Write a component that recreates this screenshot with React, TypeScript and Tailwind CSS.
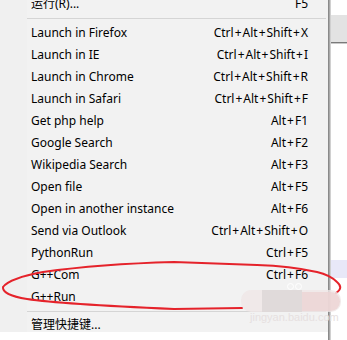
import React from "react";

const items: [string, string][] = [
  ["Launch in Firefox", "Ctrl+Alt+Shift+X"],
  ["Launch in IE", "Ctrl+Alt+Shift+I"],
  ["Launch in Chrome", "Ctrl+Alt+Shift+R"],
  ["Launch in Safari", "Ctrl+Alt+Shift+F"],
  ["Get php help", "Alt+F1"],
  ["Google Search", "Alt+F2"],
  ["Wikipedia Search", "Alt+F3"],
  ["Open file", "Alt+F5"],
  ["Open in another instance", "Alt+F6"],
  ["Send via Outlook", "Ctrl+Alt+Shift+O"],
  ["PythonRun", "Ctrl+F5"],
  ["G++Com", "Ctrl+F6"],
  ["G++Run", ""],
];

function Shortcut({ text }: { text: string }) {
  const parts = text.split("+");
  return (
    <span className="flex">
      {parts.map((p, i) => (
        <React.Fragment key={i}>
          {i > 0 && <span className="px-[1px]">+</span>}
          <span>{p}</span>
        </React.Fragment>
      ))}
    </span>
  );
}

function Row({ label, shortcut }: { label: string; shortcut: string }) {
  return (
    <div className="h-[22px] shrink-0 flex items-center justify-between pl-[4px] pr-[20px]">
      <span>{label}</span>
      {shortcut ? <Shortcut text={shortcut} /> : <span />}
    </div>
  );
}

export default function App() {
  return (
    <div
      className="relative w-[347px] h-[340px] bg-white overflow-hidden flex text-[12px] text-black"
      style={{ fontFamily: '"Noto Sans", "Noto Sans CJK SC", sans-serif' }}
    >
      <div className="w-[328px] h-[332px] flex bg-[#f2f2f2] overflow-hidden">
        <div className="w-[27px] shrink-0 bg-[#f0f0f0]" />
        <div className="flex-1 flex flex-col">
          <div className="-mt-[7px]">
            <Row label="运行(R)..." shortcut="F5" />
          </div>
          <div className="h-[7px] shrink-0 pt-[3px] pr-[2px]">
            <div className="h-px bg-[#d5d5d5]" />
          </div>
          {items.map(([l, s]) => (
            <Row key={l} label={l} shortcut={s} />
          ))}
          <div className="h-[6px] shrink-0 pt-[3px] pr-[2px]">
            <div className="h-px bg-[#d5d5d5]" />
          </div>
          <Row label="管理快捷键..." shortcut="" />
        </div>
      </div>
      <div className="w-px h-full bg-[#8a8a8a]" />
      <div className="w-px h-full bg-[#a8a8a8]" />
      <div className="w-px h-full bg-[#d0d0d0]" />
      <div className="flex-1 flex flex-col">
        <div className="h-[15px]" />
        <div className="h-[27px] bg-[#e3e3e3]" />
        <div className="h-px bg-[#7a7a7a]" />
        <div className="h-px bg-[#c8c8c8]" />
        <div className="h-[216px]" />
        <div className="h-[18px] bg-[#e8e8f8]" />
      </div>

      <svg
        className="absolute left-0 top-0 pointer-events-none"
        width="347"
        height="340"
        viewBox="0 0 347 340"
      >
        <path
          d="M336,293 Q344,288 337,282 Q330,275 317,272 Q290,266 257,265 L174,262 Q100,264 43,272 Q10,278 3,287 Q2,295 27,299 Q60,304 174,309 L242,308"
          fill="none"
          stroke="#e5232b"
          strokeWidth="2"
          strokeLinecap="round"
        />
      </svg>

      <div className="absolute left-[241px] top-[290px] w-[100px] h-[22px] rounded-[10px] bg-[#efe6e6] opacity-80" />
      <div className="absolute left-[262px] top-[290px] w-[40px] h-[22px] bg-[#dcd6d6] opacity-80" />
      <div className="absolute left-[302px] top-[292px] w-[38px] h-[19px] rounded-r-[10px] bg-[#ecd3d3] opacity-80" />
      <div className="absolute left-[287px] top-[283px] w-[7px] h-[7px] rounded-full border border-white" />
      <div className="absolute left-[295px] top-[283px] w-[7px] h-[7px] rounded-full border border-white" />
      <div
        className="absolute left-[250px] top-[312px] text-[11px] text-[#e6e0e0] leading-none"
        style={{ fontFamily: '"Liberation Sans", sans-serif' }}
      >
        jingyan.baidu.com
      </div>
    </div>
  );
}
